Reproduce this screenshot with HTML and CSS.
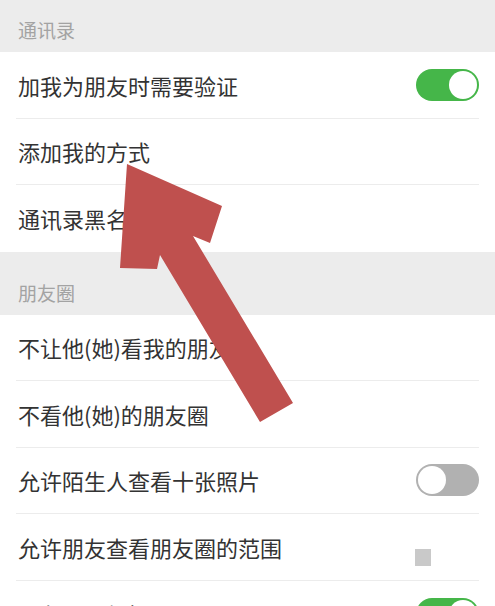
FILE: index.html
```html
<!DOCTYPE html>
<html lang="zh-CN">
<head>
  <meta charset="UTF-8" />
  <meta name="viewport" content="width=device-width, initial-scale=1.0" />
  <title>隐私</title>
  <link rel="stylesheet" href="styles.css">
</head>
<body>
  <div class="section-title first">通讯录</div>
  <div class="group">
    <div class="row">
      <span class="label">加我为朋友时需要验证</span>
      <span class="switch on"></span>
    </div>
    <div class="row">
      <span class="label">添加我的方式</span>
    </div>
    <div class="row">
      <span class="label">通讯录黑名单</span>
    </div>
  </div>

  <div class="section-title">朋友圈</div>
  <div class="group">
    <div class="row">
      <span class="label">不让他(她)看我的朋友圈</span>
    </div>
    <div class="row">
      <span class="label">不看他(她)的朋友圈</span>
    </div>
    <div class="row">
      <span class="label">允许陌生人查看十张照片</span>
      <span class="switch"></span>
    </div>
    <div class="row">
      <span class="label">允许朋友查看朋友圈的范围</span>
      <span class="marker"></span>
    </div>
    <div class="row">
      <span class="label">朋友圈更新提醒</span>
      <span class="switch on"></span>
    </div>
  </div>

  <!-- red arrow drawn over the list -->
  <svg class="arrow" width="495" height="606" viewBox="0 0 495 606">
    <polygon points="127,164 222,206 210,243 193,236 293,403 260,422 160,255 157,269 120,268" fill="#bf504e" />
  </svg>
</body>
</html>
```

FILE: styles.css
```css
* {
  margin: 0;
  padding: 0;
  box-sizing: border-box;
}
body {
  background-color: #ececec;
  font-family: "Noto Sans CJK SC", "Noto Sans", sans-serif;
  color: #333;
  position: relative;
  min-height: 606px;
}
.section-title {
  height: 63px;
  display: flex;
  align-items: flex-end;
  padding: 0 18px 11px;
  font-size: 19px;
  line-height: 22px;
  color: #a3a3a3;
}
.section-title.first {
  height: 52px;
}
.group {
  background: #fff;
}
.row {
  height: 66.5px;
  margin: 0 16px 0 16px;
  padding-left: 2px;
  display: flex;
  align-items: center;
  justify-content: space-between;
  border-bottom: 1px solid #ececec;
}
.row:last-child {
  border-bottom: none;
}
.label {
  font-size: 22px;
  line-height: 26px;
  white-space: nowrap;
}
.switch {
  position: relative;
  width: 63px;
  height: 32px;
  border-radius: 16px;
  background: #b1b1b1;
}
.switch::after {
  content: "";
  position: absolute;
  top: 2px;
  left: 2px;
  width: 28px;
  height: 28px;
  border-radius: 50%;
  background: #fff;
}
.switch.on {
  background: #45b649;
}
.switch.on::after {
  left: 33px;
}
.marker {
  align-self: flex-end;
  width: 16px;
  height: 17px;
  margin: 0 48px 14px 0;
  background: #c9c9c9;
}
.arrow {
  position: absolute;
  top: 0;
  left: 0;
  pointer-events: none;
}
```
